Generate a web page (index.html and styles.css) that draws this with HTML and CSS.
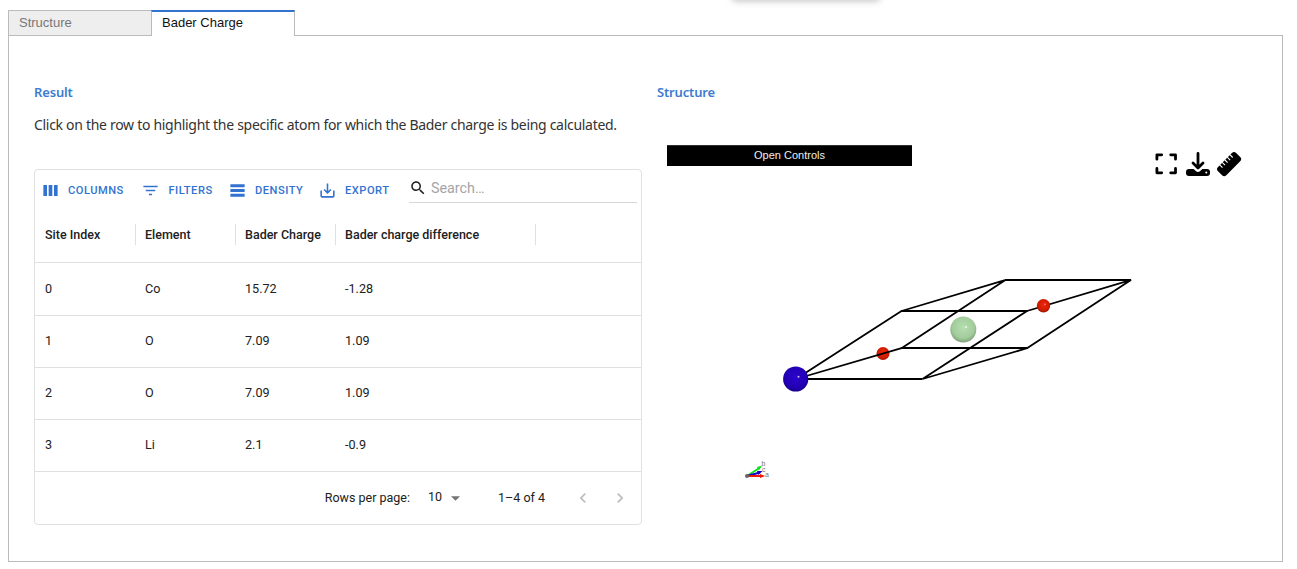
FILE: index.html
```html
<!DOCTYPE html>
<html lang="en">
<head>
<meta charset="utf-8">
<title>Bader Charge</title>
<link rel="stylesheet" href="styles.css">
</head>
<body>
<div class="popover-edge"></div>
<main class="app">
  <nav class="tabs">
    <div class="tab">Structure</div>
    <div class="tab tab-active">Bader Charge</div>
  </nav>
  <div class="panel">
    <section class="result">
      <h2 class="title">Result</h2>
      <p class="hint">Click on the row to highlight the specific atom for which the Bader charge is being calculated.</p>
      <div class="grid">
        <div class="toolbar">
          <button class="tool tool-columns"><svg class="icon" viewBox="0 0 24 24"><path d="M3 5h4.6v14H3zM9.7 5h4.6v14H9.7zM16.4 5H21v14h-4.6z"/></svg><span>COLUMNS</span></button>
          <button class="tool tool-filters"><svg class="icon" viewBox="0 0 24 24"><path d="M10 18h4v-2h-4v2zM3 6v2h18V6H3zm3 7h12v-2H6v2z"/></svg><span>FILTERS</span></button>
          <button class="tool tool-density"><svg class="icon" viewBox="0 0 24 24"><path d="M21 8H3V4h18v4zm0 2H3v4h18v-4zm0 6H3v4h18v-4z"/></svg><span>DENSITY</span></button>
          <button class="tool tool-export"><svg class="icon" viewBox="0 0 24 24"><path d="M19 12v7H5v-7H3v7c0 1.1.9 2 2 2h14c1.1 0 2-.9 2-2v-7h-2zm-6 .67l2.59-2.58L17 11.5l-5 5-5-5 1.41-1.41L11 12.67V3h2z"/></svg><span>EXPORT</span></button>
          <div class="search"><svg class="icon-search" viewBox="0 0 24 24"><path d="M15.5 14h-.79l-.28-.27C15.41 12.59 16 11.11 16 9.5 16 5.91 13.09 3 9.5 3S3 5.91 3 9.5 5.91 16 9.5 16c1.61 0 3.09-.59 4.23-1.57l.27.28v.79l5 4.99L20.49 19l-4.99-5zm-6 0C7.01 14 5 11.99 5 9.5S7.01 5 9.5 5 14 7.01 14 9.5 11.99 14 9.5 14z"/></svg><span class="placeholder">Search…</span></div>
        </div>
        <div class="row head"><div class="cell">Site Index</div><div class="cell">Element</div><div class="cell">Bader Charge</div><div class="cell wide">Bader charge difference</div></div>
        <div class="row"><div class="cell">0</div><div class="cell">Co</div><div class="cell">15.72</div><div class="cell wide">-1.28</div></div>
        <div class="row"><div class="cell">1</div><div class="cell">O</div><div class="cell">7.09</div><div class="cell wide">1.09</div></div>
        <div class="row"><div class="cell">2</div><div class="cell">O</div><div class="cell">7.09</div><div class="cell wide">1.09</div></div>
        <div class="row"><div class="cell">3</div><div class="cell">Li</div><div class="cell">2.1</div><div class="cell wide">-0.9</div></div>
        <div class="footer">
          <span class="per-page">Rows per page:</span>
          <span class="page-size">10</span>
          <svg class="caret" viewBox="0 0 10 5"><path d="M0 0h10L5 5z"/></svg>
          <span class="range">1–4 of 4</span>
          <svg class="arrow" viewBox="0 0 24 24"><path d="M15.41 7.41L14 6l-6 6 6 6 1.41-1.41L10.83 12z"/></svg>
          <svg class="arrow arrow-next" viewBox="0 0 24 24"><path d="M10 6L8.59 7.41 13.17 12l-4.58 4.59L10 18l6-6z"/></svg>
        </div>
      </div>
    </section>
    <section class="structure">
      <h2 class="title">Structure</h2>
      <div class="viewer-bar">
        <button class="controls">Open Controls</button>
        <div class="actions">
          <svg class="action" viewBox="0 0 24 24"><path class="stroke" d="M1.900 7.200V2.800H6.700M15.700 2.800h4.800v4.400M20.500 16.400V20.800H15.700M6.700 20.800H1.900v-4.400"/></svg>
          <svg class="action" viewBox="0 0 24 24"><path class="stroke" d="M12 1.500v14M7 11l5 5 5-5"/><path d="M3 17h4.600l2.500 2.200a2.900 2.900 0 0 0 3.800 0l2.500-2.200H21a3 3 0 0 1 3 3v1a3 3 0 0 1-3 3H3a3 3 0 0 1-3-3v-1a3 3 0 0 1 3-3z"/><circle class="hole" cx="20.300" cy="20.400" r="1"/></svg>
          <svg class="action" viewBox="0 0 24 24"><g transform="rotate(-45 12 12)"><rect x="-.8" y="6.300" width="25.600" height="11.700" rx="3"/><path class="ticks" d="M4.800 6v4M8.400 6v4M12 6v4M15.600 6v4M19.200 6v4"/></g></svg>
        </div>
      </div>
      <svg class="scene" viewBox="657 175 600 325">
        <defs>
          <radialGradient id="blue" cx=".5" cy=".42" r=".64"><stop offset="0" stop-color="#2b05cc"/><stop offset=".65" stop-color="#2300b5"/><stop offset="1" stop-color="#17007a"/></radialGradient>
          <radialGradient id="red" cx=".5" cy=".42" r=".64"><stop offset="0" stop-color="#ed2709"/><stop offset=".65" stop-color="#d01b00"/><stop offset="1" stop-color="#861200"/></radialGradient>
          <radialGradient id="green" cx=".5" cy=".42" r=".64"><stop offset="0" stop-color="#b6dfaf"/><stop offset=".65" stop-color="#a2cc9b"/><stop offset="1" stop-color="#728f6d"/></radialGradient>
        </defs>
        <circle cx="883" cy="353.500" r="6.500" fill="url(#red)"/>
        <path class="lattice" d="M796 379L901.500 311L1005 280.200M796 379L901.500 348.200L1005 280.200M922.500 379L1027 348.200M922.500 379L1027 311M1027 311L1130.500 280.200L1027 348.200"/>
        <path class="lattice level" d="M796 379H922.500M901 348H1027.500M901 311H1027.500M1005 280H1131"/>
        <circle cx="795.700" cy="379" r="12.600" fill="url(#blue)"/><circle class="shine" cx="798.500" cy="376.800" r="1"/>
        <circle cx="963.300" cy="329.500" r="13" fill="url(#green)"/><circle class="shine" cx="966" cy="327" r="1.100"/>
        <circle cx="1043.500" cy="305.800" r="6.700" fill="url(#red)"/><circle class="shine dim" cx="1045" cy="304.400" r=".8"/>
        <g class="axes">
          <path stroke="#0be01b" d="M747 476L758.500 468.500"/><path fill="#0be01b" stroke="none" d="M757 467l5-1.500-3 5z"/>
          <path stroke="#1400c8" d="M747 476L760 472.500"/><path fill="#1400c8" stroke="none" d="M757 471l5.500 0-4 4z"/>
          <path stroke="#ed1708" d="M747 476H763"/><path fill="#ed1708" stroke="none" d="M760 474l5 2-5 2z"/>
          <circle cx="747" cy="476" r="2" fill="#666"/>
          <text x="761.500" y="466">b</text><text x="762" y="472">c</text><text x="765" y="477">a</text>
        </g>
      </svg>
    </section>
  </div>
</main>
</body>
</html>
```
FILE: styles.css
```css
* { box-sizing: border-box; }
body { margin: 0; height: 569px; overflow: hidden; background: #fff; font-family: Roboto, sans-serif; color: #212121; }
button { border: 0; margin: 0; padding: 0; background: none; font: inherit; color: inherit; }
svg { flex: none; display: block; }

/* Bottom edge of a popover above the viewport */
.popover-edge { position: absolute; left: 732px; top: -20px; width: 148px; height: 20px; border-radius: 4px; box-shadow: 0 1px 7px rgba(0,0,0,.25); }

.app { padding: 10px 14px 0 8px; }
.tabs { display: flex; height: 25px; }
.tab { width: 144px; height: 26px; padding: 0 10px; border: 1px solid #bbb; background: #eee; color: #777; font: 13px/23px "Liberation Sans", Arial, sans-serif; }
.tab-active { position: relative; margin-left: -1px; border-top: 2px solid #3273d1; border-bottom: 0; background: #fff; color: #111; line-height: 21px; }
.panel { display: flex; height: 527px; border: 1px solid #bbb; padding: 48px 25px 0; }
.result { width: 608px; margin-right: 15px; }
.structure { flex: 1; min-width: 0; }
.title { margin: 0; height: 16px; font: 600 13px/16px "Noto Sans", sans-serif; letter-spacing: -.16px; color: #3c7bd0; }
.hint { margin: 15px 0 0; height: 20px; font: 14px/20px "Noto Sans", sans-serif; letter-spacing: -.3px; color: #333; white-space: nowrap; }

.grid { margin-top: 34px; height: 356px; border: 1px solid #e0e0e0; border-radius: 4px; font-size: 13px; }
.toolbar { display: flex; height: 37px; padding: 4px 4px 0 6px; align-items: flex-start; }
.tool { display: flex; align-items: center; height: 32px; font-size: 11.14px; font-weight: 500; letter-spacing: .5px; color: #3273d1; white-space: nowrap; }
.tool-columns { width: 100.400px; }
.tool-filters { width: 86.600px; }
.tool-density { width: 90px; }
.tool-export { width: 91px; }
.icon { width: 19px; height: 19px; margin-right: 8px; fill: #3273d1; }
.search { flex: 1; display: flex; align-items: center; height: 29px; border-bottom: 1px solid #d8d8d8; }
.icon-search { width: 18px; height: 18px; margin-right: 4px; fill: #212121; }
.placeholder { font-size: 14.3px; color: #a5a5a5; }

.row { display: flex; height: 52px; border-bottom: 1px solid #e0e0e0; align-items: center; padding-bottom: 2px; }
.cell { width: 100px; padding-left: 10px; white-space: nowrap; font-size: 12.6px; }
.wide { width: 200px; }
.head { height: 56px; font-weight: 500; padding-bottom: 0; }
.head .cell { position: relative; font-size: 12.5px; }
.head .cell::after { content: ""; position: absolute; right: -1px; top: -3px; width: 1px; height: 21px; background: #e0e0e0; }
.head + .row { height: 53px; }

.footer { display: flex; height: 52px; align-items: center; justify-content: flex-end; padding: 0 11px 1px 0; white-space: nowrap; font-size: 12.5px; }
.page-size { margin: -2px 9px 0 18px; }
.caret { width: 9px; height: 5px; margin-top: 2px; fill: #757575; }
.range { margin: 0 28px 0 38px; }
.arrow { width: 20px; height: 20px; margin-top: 1px; fill: #bdbdbd; }
.arrow-next { margin-left: 17px; }

.viewer-bar { display: flex; justify-content: space-between; margin-top: 44px; padding: 1px 16px 0 10px; height: 31px; }
.controls { width: 245px; height: 21px; padding-bottom: 2px; background: #000; border-top: 1px solid #2c2c2c; color: #eee; font: 11px/18px "Liberation Sans", Arial, sans-serif; }
.actions { display: flex; gap: 7px; padding-top: 7px; }
.action { width: 24px; height: 24px; overflow: visible; }
.stroke { fill: none; stroke: #000; stroke-width: 2.8; stroke-linecap: round; stroke-linejoin: round; }
.hole { fill: #fff; }
.ticks { stroke: #fff; stroke-width: 1.1; }
.scene { width: 600px; height: 325px; }
.lattice { fill: none; stroke: #000; stroke-width: 1.8; stroke-linejoin: round; }
.level { stroke-width: 2; }
.shine { fill: #fff; opacity: .75; }
.dim { opacity: .45; }
.axes { stroke-width: 2; font: 7px "Liberation Sans", Arial, sans-serif; }
.axes text { fill: #777; stroke: none; }
```
